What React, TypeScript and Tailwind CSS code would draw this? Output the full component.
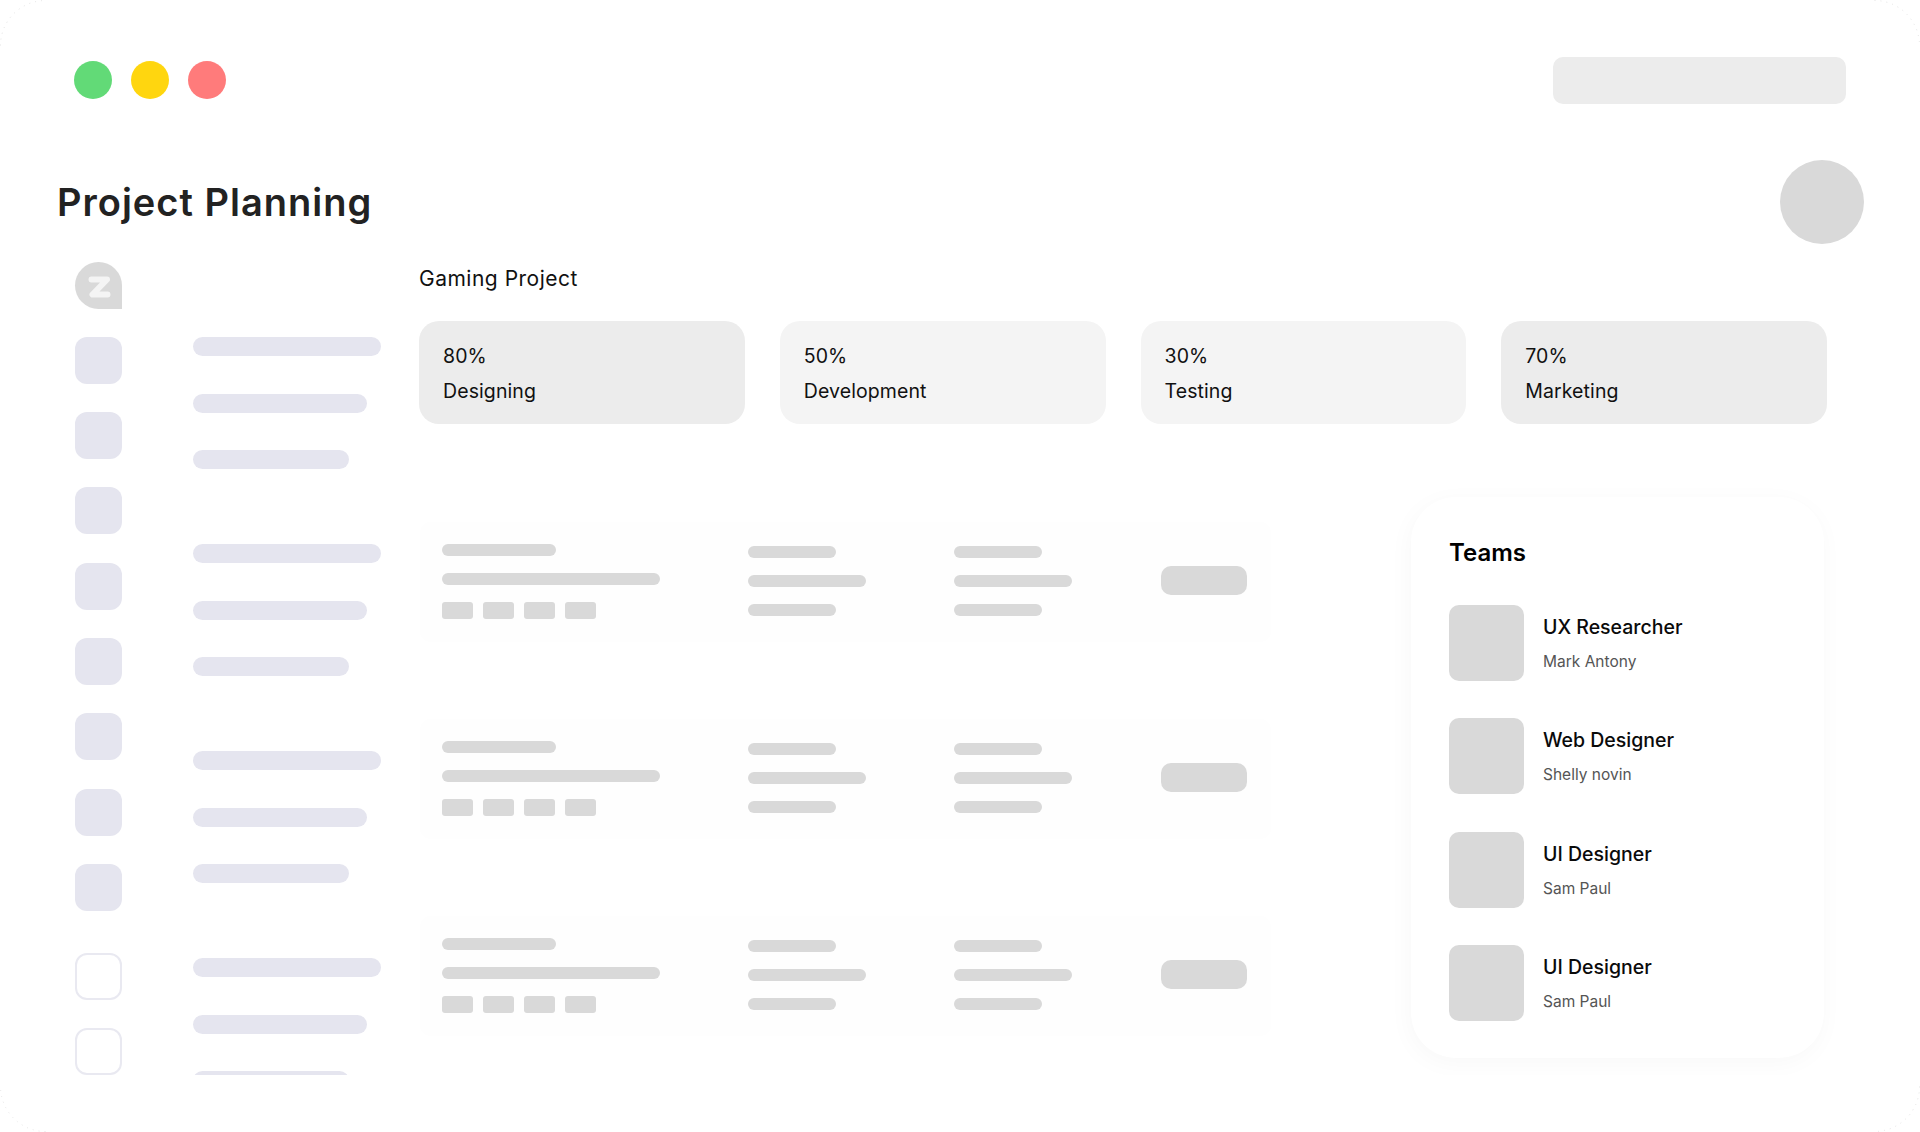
const font = "font-['Inter','Liberation_Sans',sans-serif]"

const stats = [
  { value: '80%', label: 'Designing', bg: 'bg-[#ececec]' },
  { value: '50%', label: 'Development', bg: 'bg-[#f4f4f4]' },
  { value: '30%', label: 'Testing', bg: 'bg-[#f4f4f4]' },
  { value: '70%', label: 'Marketing', bg: 'bg-[#ececec]' },
]

const team = [
  { role: 'UX Researcher', name: 'Mark Antony' },
  { role: 'Web Designer', name: 'Shelly novin' },
  { role: 'UI Designer', name: 'Sam Paul' },
  { role: 'UI Designer', name: 'Sam Paul' },
]

// faint dotted arc left over at the window's rounded corners
function Corner({ className }: { className: string }) {
  return (
    <svg className={`absolute h-[46px] w-[46px] ${className}`} viewBox="0 0 46 46" fill="none">
      <path d="M0.5 45.5A45 45 0 0 1 45.5 0.5" stroke="#e4e4e4" strokeDasharray="1 5" />
    </svg>
  )
}

function Logo() {
  return (
    <div className="flex h-[47px] w-[47px] items-center justify-center rounded-[24px] rounded-br-none bg-[#d9d9d9]">
      <svg className="ml-[2px] mt-[3px]" width="24" height="24" viewBox="0 0 24 24" fill="none">
        <path d="M3.5 4.5h15.5L4.5 19.5h15" stroke="#f4f4f4" strokeWidth="6" strokeLinecap="round" strokeLinejoin="round" />
      </svg>
    </div>
  )
}

function Rail() {
  return (
    <div className="flex w-[47px] shrink-0 flex-col">
      <Logo />
      <div className="mt-[28px] flex flex-col gap-[28.33px]">
        {[0, 1, 2, 3, 4, 5, 6, 7].map((i) => (
          <div key={i} className="h-[47px] w-[47px] rounded-[12px] bg-[#e5e5ef]" />
        ))}
      </div>
      <div className="mt-[42px] flex flex-col gap-[28px]">
        {[0, 1].map((i) => (
          <div key={i} className="h-[47px] w-[47px] rounded-[12px] border-2 border-[#e9e9f1] bg-white" />
        ))}
      </div>
    </div>
  )
}

function NavBars() {
  return (
    <div className="ml-[71px] flex w-[188px] shrink-0 flex-col gap-[75px] pt-[75px]">
      {[0, 1, 2, 3].map((i) => (
        <div key={i} className="flex flex-col gap-[37.5px]">
          <div className="h-[19px] w-[188px] rounded-full bg-[#e5e5ef]" />
          <div className="h-[19px] w-[174px] rounded-full bg-[#e5e5ef]" />
          <div className="h-[19px] w-[156px] rounded-full bg-[#e5e5ef]" />
        </div>
      ))}
    </div>
  )
}

function StatCard({ value, label, bg }: { value: string; label: string; bg: string }) {
  return (
    <div className={`h-[103px] w-[326px] rounded-[20px] pl-[24px] pt-[23px] text-[19.5px] leading-[24px] tracking-[0.1px] text-[#111] ${bg}`}>
      <p>{value}</p>
      <p className="mt-[11px]">{label}</p>
    </div>
  )
}

function Row() {
  return (
    <div className="grid h-[120px] w-[851px] grid-cols-[306px_206px_206px_87px] rounded-[10px] bg-[#fefefe] pl-[21.5px]">
      <div className="flex flex-col pt-[22px]">
        <div className="h-[12px] w-[114px] rounded-full bg-[#d9d9d9]" />
        <div className="mt-[17px] h-[12px] w-[218px] rounded-full bg-[#d9d9d9]" />
        <div className="mt-[17px] flex gap-[10px]">
          {[0, 1, 2, 3].map((i) => (
            <div key={i} className="h-[17px] w-[31px] rounded-[3px] bg-[#d9d9d9]" />
          ))}
        </div>
      </div>
      {[0, 1].map((i) => (
        <div key={i} className="flex flex-col gap-[17px] pt-[24px]">
          <div className="h-[12px] w-[88px] rounded-full bg-[#d9d9d9]" />
          <div className="h-[12px] w-[118px] rounded-full bg-[#d9d9d9]" />
          <div className="h-[12px] w-[88px] rounded-full bg-[#d9d9d9]" />
        </div>
      ))}
      <div className="flex items-center pb-[3px]">
        <div className="ml-px h-[29px] w-[87px] rounded-[10px] bg-[#d9d9d9]" />
      </div>
    </div>
  )
}

function Teams() {
  return (
    <div className="h-[561px] w-[413px] rounded-[45px] bg-white pl-[38px] pt-[40px] shadow-[-2px_5px_24px_rgba(0,0,0,0.03)]">
      <h3 className="text-[24px] font-semibold leading-[32px] text-black">Teams</h3>
      <div className="mt-[36px] flex flex-col gap-[37.33px]">
        {team.map((m, i) => (
          <div key={i} className="flex h-[76px] items-center">
            <div className="h-[76px] w-[75px] rounded-[10px] bg-[#d9d9d9]" />
            <div className="ml-[19px] pt-px">
              <p className="text-[19.5px] font-medium leading-[26px] text-[#0a0a0a]">{m.role}</p>
              <p className="mt-[11px] text-[15.5px] leading-[22px] text-[#555]">{m.name}</p>
            </div>
          </div>
        ))}
      </div>
    </div>
  )
}

export default function App() {
  return (
    <div className={`relative flex h-[1132px] w-[1920px] flex-col overflow-hidden bg-white pt-[57px] ${font}`}>
      <Corner className="left-0 top-0" />
      <Corner className="right-0 top-0 rotate-90" />
      <Corner className="bottom-0 right-0 rotate-180" />
      <Corner className="bottom-0 left-0 -rotate-90" />

      <header className="flex h-[47px] items-start justify-between px-[74px]">
        <div className="mt-[4px] flex gap-[19px]">
          <span className="h-[38px] w-[38px] rounded-full bg-[#62da77]" />
          <span className="h-[38px] w-[38px] rounded-full bg-[#ffd60f]" />
          <span className="h-[38px] w-[38px] rounded-full bg-[#ff7b7b]" />
        </div>
        <div className="h-[47px] w-[293px] rounded-[10px] bg-[#ececec]" />
      </header>

      <div className="mt-[56px] flex h-[84px] items-center justify-between pl-[57px] pr-[56px]">
        <h1 className="text-[38px] font-semibold tracking-[1px] text-[#222]">Project Planning</h1>
        <div className="h-[84px] w-[84px] rounded-full bg-[#d9d9d9]" />
      </div>

      <div className="mt-[18px] flex h-[813px] overflow-hidden pl-[75px]">
        <Rail />
        <NavBars />
        <main className="ml-[38px] w-[1408px]">
          <h2 className="h-[30px] pt-[2px] text-[21px] leading-[30px] tracking-[0.5px] text-[#111]">Gaming Project</h2>
          <div className="mt-[29px] flex gap-[35px]">
            {stats.map((s) => (
              <StatCard key={s.label} {...s} />
            ))}
          </div>
          <div className="mt-[73px] flex">
            <div className="ml-px mt-[25px] flex flex-col gap-[77px]">
              <Row />
              <Row />
              <Row />
            </div>
            <div className="ml-[140px]">
              <Teams />
            </div>
          </div>
        </main>
      </div>
    </div>
  )
}
